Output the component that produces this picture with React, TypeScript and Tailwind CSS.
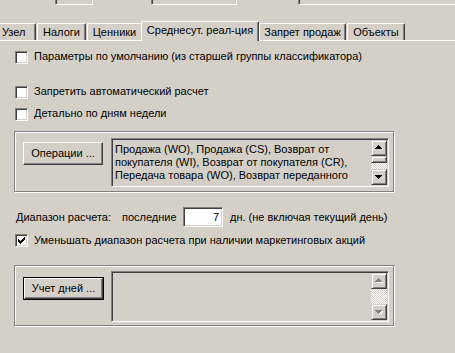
import * as React from "react";

const raised =
  "border border-t-white border-l-white border-r-[#404040] border-b-[#404040] shadow-[inset_-1px_-1px_0_#808080]";
const scrollBtn =
  "border border-t-[#d4d0c8] border-l-[#d4d0c8] border-r-[#404040] border-b-[#404040] shadow-[inset_1px_1px_0_#fff,inset_-1px_-1px_0_#808080]";
const sunken =
  "border border-t-[#808080] border-l-[#808080] border-r-white border-b-white shadow-[inset_1px_1px_0_#404040,inset_-1px_-1px_0_#d4d0c8]";

function CheckMark() {
  const px: [number, number, number][] = [
    [6, 0, 1],
    [5, 1, 2],
    [0, 2, 1],
    [4, 2, 3],
    [0, 3, 2],
    [3, 3, 3],
    [0, 4, 5],
    [1, 5, 3],
    [2, 6, 1],
  ];
  return (
    <svg width="7" height="7" viewBox="0 0 7 7" shapeRendering="crispEdges">
      {px.map(([x, y, w], i) => (
        <rect key={i} x={x} y={y} width={w} height={1} fill="#000" />
      ))}
    </svg>
  );
}

function CheckRow({ label, checked, className, textClass }: { label: string; checked?: boolean; className?: string; textClass?: string }) {
  return (
    <div className={"flex items-start ml-px " + (className ?? "")}>
      <span className={"w-[13px] h-[13px] shrink-0 bg-white flex items-center justify-center " + sunken}>
        {checked && <CheckMark />}
      </span>
      <span className={"ml-[6px] whitespace-nowrap " + (textClass ?? "-mt-px")}>{label}</span>
    </div>
  );
}

function Arrow({ up, disabled }: { up?: boolean; disabled?: boolean }) {
  const rows = up ? [[3, 1], [2, 3], [1, 5], [0, 7]] : [[0, 7], [1, 5], [2, 3], [3, 1]];
  return (
    <svg width="8" height="5" viewBox="0 0 8 5" shapeRendering="crispEdges">
      {disabled &&
        rows.map(([x, w], i) => <rect key={"s" + i} x={x + 1} y={i + 1} width={w} height={1} fill="#fff" />)}
      {rows.map(([x, w], i) => (
        <rect key={i} x={x} y={i} width={w} height={1} fill={disabled ? "#808080" : "#000"} />
      ))}
    </svg>
  );
}

function ScrollBar({ disabled }: { disabled?: boolean }) {
  const track =
    "bg-[image:repeating-conic-gradient(#fff_0_25%,#d4d0c8_0_50%)] bg-[length:2px_2px]";
  return (
    <div className="w-[16px] shrink-0 flex flex-col my-px mr-px">
      <div className={"h-[16px] shrink-0 flex items-center justify-center pb-px " + scrollBtn}>
        <Arrow up disabled={disabled} />
      </div>
      {disabled ? (
        <div className={"flex-1 " + track} />
      ) : (
        <>
          <div className={"h-[7px] shrink-0 " + scrollBtn} />
          <div className={"flex-1 " + track} />
        </>
      )}
      <div className={"h-[16px] shrink-0 flex items-center justify-center " + scrollBtn}>
        <Arrow disabled={disabled} />
      </div>
    </div>
  );
}

function Memo({ lines, disabled, className }: { lines: string[]; disabled?: boolean; className?: string }) {
  return (
    <div className={"w-[278px] flex bg-[#d4d0c8] " + sunken + " " + (className ?? "")}>
      <div className="flex-1 pl-[3px] pt-[4px] whitespace-nowrap overflow-hidden">
        {lines.map((l) => (
          <div key={l}>{l}</div>
        ))}
      </div>
      <ScrollBar disabled={disabled} />
    </div>
  );
}

function Tab({ label, w, selected, noRight, left }: { label: string; w: string; selected?: boolean; noRight?: boolean; left?: boolean }) {
  return (
    <div
      className={
        "shrink-0 rounded-tr-[2px] border-t border-t-white pt-[2px] whitespace-nowrap bg-[#d4d0c8] " +
        w +
        (left ? " pl-[2px]" : " text-center rounded-tl-[2px] border-l border-l-white") +
        (noRight ? "" : " border-r border-r-[#404040] shadow-[inset_-1px_0_0_#808080]") +
        (selected ? " h-[20px] -mb-px relative z-10" : " h-[17px]")
      }
    >
      {label}
    </div>
  );
}

export default function App() {
  return (
    <div className="w-[455px] h-[353px] overflow-hidden bg-[#d4d0c8] flex flex-col font-['Liberation_Sans',Arial,sans-serif] text-[11px] leading-[13px] text-black">
      {/* cut-off edits above the page control */}
      <div className="h-[5px] flex shrink-0">
        <div className="ml-[55px] w-[38px] border-l border-l-[#808080] border-r border-r-white border-b border-b-white shadow-[inset_1px_0_0_#404040,inset_0_-1px_0_#d4d0c8]" />
        <div className="ml-[58px] w-[86px] border-l border-l-[#808080] border-r border-r-white border-b border-b-white shadow-[inset_1px_0_0_#404040,inset_0_-1px_0_#d4d0c8]" />
        <div className="ml-[61px] flex-1 border-l border-l-[#808080] border-b border-b-white shadow-[inset_1px_0_0_#404040,inset_0_-1px_0_#d4d0c8]" />
      </div>

      <div className="mt-[16px] h-[19px] flex items-end shrink-0">
        <Tab label="Узел" w="w-[36px]" left />
        <div className="w-px shrink-0" />
        <Tab label="Налоги" w="w-[49px]" />
        <div className="w-px shrink-0" />
        <Tab label="Ценники" w="w-[54px]" noRight />
        <Tab label="Среднесут. реал-ция" w="w-[118px]" selected />
        <Tab label="Запрет продаж" w="w-[87px]" />
        <div className="w-px shrink-0" />
        <Tab label="Объекты" w="w-[58px]" />
      </div>

      <div className="flex-1 border-t border-t-white pl-[14px] flex flex-col">
        <CheckRow className="mt-[10px]" label="Параметры по умолчанию (из старшей группы классификатора)" />
        <CheckRow className="mt-[22px]" label="Запретить автоматический расчет" />
        <CheckRow className="mt-[9px]" label="Детально по дням недели" />

        <div className="mt-[10px] w-[380px] h-[61px] shrink-0 flex items-start border border-[#808080] shadow-[1px_1px_0_#fff,inset_1px_1px_0_#fff]">
          <button className={"ml-[8px] mt-[10px] w-[80px] h-[23px] shrink-0 bg-[#d4d0c8] pb-px " + raised}>
            Операции ...
          </button>
          <Memo
            className="ml-[8px] mt-[6px] h-[49px]"
            lines={[
              "Продажа (WO), Продажа (CS), Возврат от",
              "покупателя (WI), Возврат от покупателя (CR),",
              "Передача товара (WO), Возврат переданного",
            ]}
          />
        </div>

        <div className="mt-[15px] h-[20px] flex items-center ml-[2px] whitespace-nowrap">
          <span className="w-[106px] shrink-0">Диапазон расчета:</span>
          <span className="w-[61px] shrink-0">последние</span>
          <span className={"w-[40px] h-[20px] shrink-0 bg-white text-right pr-[3px] pt-[3px] " + sunken}>7</span>
          <span className="ml-[7px]">дн. (не включая текущий день)</span>
        </div>

        <CheckRow className="mt-[7px]" checked textClass="mt-0" label="Уменьшать диапазон расчета при наличии маркетинговых акций" />

        <div className="mt-[18px] w-[380px] h-[61px] shrink-0 flex items-start border border-[#808080] shadow-[1px_1px_0_#fff,inset_1px_1px_0_#fff]">
          <div className="ml-[8px] mt-[11px] w-[81px] h-[23px] shrink-0 border border-black">
            <button className={"w-full h-full bg-[#d4d0c8] pb-px " + raised}>Учет дней ...</button>
          </div>
          <Memo className="ml-[7px] mt-[5px] h-[51px]" lines={[]} disabled />
        </div>
      </div>
    </div>
  );
}
